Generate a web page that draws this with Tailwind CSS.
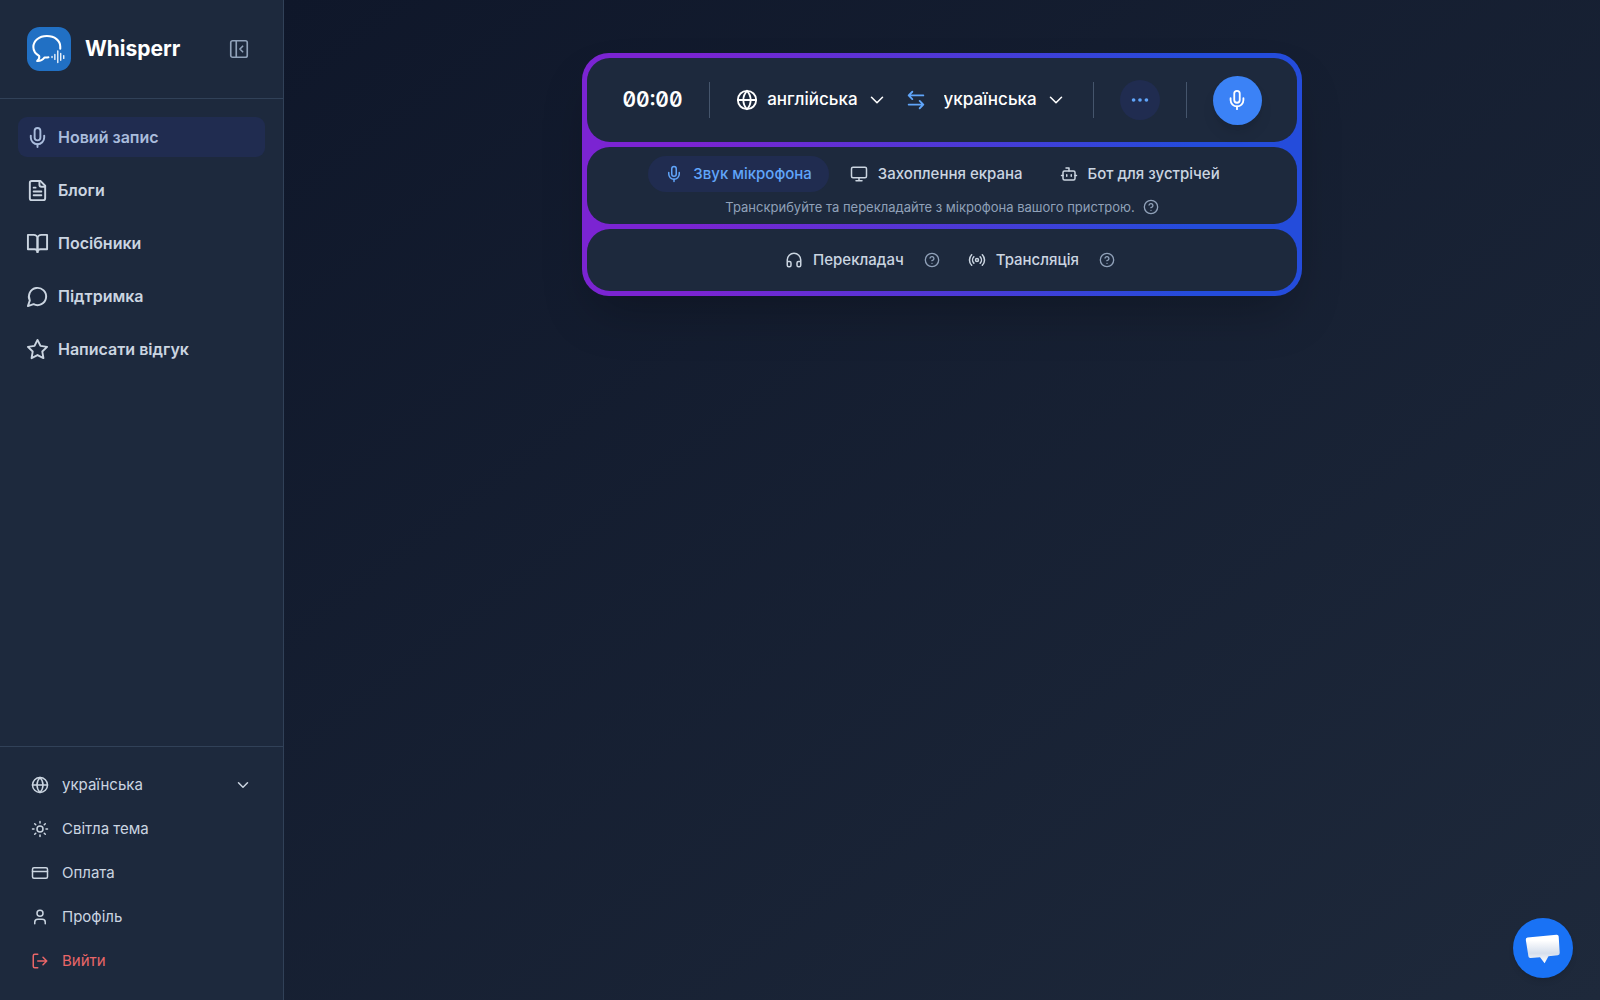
<!DOCTYPE html>
<html lang="uk">
<head>
<meta charset="utf-8">
<meta name="viewport" content="width=device-width, initial-scale=1">
<title>Whisperr</title>
<script src="https://cdn.jsdelivr.net/npm/@tailwindcss/browser@4"></script>
</head>
<body class="flex min-h-screen bg-slate-900 font-['Inter',sans-serif] text-base text-[#cbd5e1] antialiased">

<!-- Shared icon shapes, drawn on a 24 unit grid -->
<svg class="hidden" aria-hidden="true">
  <symbol id="mic" viewBox="0 0 24 24"><path d="M12 2a3 3 0 0 0-3 3v7a3 3 0 0 0 6 0V5a3 3 0 0 0-3-3Z"/><path d="M19 10v2a7 7 0 0 1-14 0v-2"/><path d="M12 19v3"/></symbol>
  <symbol id="globe" viewBox="0 0 24 24"><circle cx="12" cy="12" r="10"/><path d="M12 2a14.5 14.5 0 0 0 0 20 14.5 14.5 0 0 0 0-20"/><path d="M2 12h20"/></symbol>
  <symbol id="chevron" viewBox="0 0 24 24"><path d="m6 9 6 6 6-6"/></symbol>
  <symbol id="help" viewBox="0 0 24 24"><circle cx="12" cy="12" r="10"/><path d="M9.09 9a3 3 0 0 1 5.83 1c0 2-3 3-3 3"/><path d="M12 17h.01"/></symbol>
</svg>

<aside class="flex w-[284px] shrink-0 flex-col border-r border-slate-700 bg-slate-800">
  <div class="flex h-[99px] shrink-0 items-center border-b border-slate-700 pr-[33px] pl-[27px]">
    <svg class="size-11" viewBox="0 0 45 45" fill="none" stroke="#fff" stroke-linecap="round" stroke-linejoin="round" role="img" aria-label="Whisperr">
      <rect width="45" height="45" rx="13" fill="#2170c4" stroke="none"/>
      <path stroke-width="2.100" d="M34 22.200V20C34 14 28.400 9.300 20.300 9.300S6.500 14.200 6.500 20.500c0 4 2.200 7 5.900 9 .6 1.600-.3 3.600-2 5.300 3.500.2 5.800-1.300 7.600-3.700 1.400.2 2.700.1 3.900-.1"/>
      <path stroke-width="1.300" d="M25.600 30v1.200M28.500 28v5.200M31.500 24.500v11.800M34.500 27v7M37.600 29.200v3"/>
    </svg>
    <span class="ml-[14px] text-[21px] font-bold text-white">Whisperr</span>
    <button type="button" class="ml-auto text-slate-400" aria-label="Згорнути панель">
      <svg class="size-[22px]" viewBox="0 0 24 24" fill="none" stroke="currentColor" stroke-width="1.800" stroke-linecap="round" stroke-linejoin="round"><rect x="3" y="3" width="18" height="18" rx="2"/><path d="M9 3v18"/><path d="m16 15-3-3 3-3"/></svg>
    </button>
  </div>

  <nav class="flex flex-col gap-[13px] px-[18px] pt-[18px] font-semibold">
    <a href="#" class="flex h-10 items-center gap-[9px] rounded-[9px] bg-[#202c50] px-2 text-[#a9bcdc]">
      <svg class="size-[23px]" fill="none" stroke="currentColor" stroke-width="2" stroke-linecap="round" stroke-linejoin="round"><use href="#mic"/></svg>Новий запис</a>
    <a href="#" class="flex h-10 items-center gap-[9px] px-2">
      <svg class="size-[23px]" viewBox="0 0 24 24" fill="none" stroke="currentColor" stroke-width="2" stroke-linecap="round" stroke-linejoin="round"><path d="M15 2H6a2 2 0 0 0-2 2v16a2 2 0 0 0 2 2h12a2 2 0 0 0 2-2V7Z"/><path d="M14 2v4a2 2 0 0 0 2 2h4M10 9H8M16 13H8M16 17H8"/></svg>Блоги</a>
    <a href="#" class="flex h-10 items-center gap-[9px] px-2">
      <svg class="size-[23px]" viewBox="0 0 24 24" fill="none" stroke="currentColor" stroke-width="2" stroke-linecap="round" stroke-linejoin="round"><path d="M2 3h6a4 4 0 0 1 4 4v14a3 3 0 0 0-3-3H2z"/><path d="M22 3h-6a4 4 0 0 0-4 4v14a3 3 0 0 1 3-3h7z"/></svg>Посібники</a>
    <a href="#" class="flex h-10 items-center gap-[9px] px-2">
      <svg class="size-[23px]" viewBox="0 0 24 24" fill="none" stroke="currentColor" stroke-width="2" stroke-linecap="round" stroke-linejoin="round"><path d="M7.900 20A9 9 0 1 0 4 16.100L2 22Z"/></svg>Підтримка</a>
    <a href="#" class="flex h-10 items-center gap-[9px] px-2">
      <svg class="size-[23px]" viewBox="0 0 24 24" fill="none" stroke="currentColor" stroke-width="2" stroke-linecap="round" stroke-linejoin="round"><path d="m12 2 3.090 6.260L22 9.270l-5 4.870 1.180 6.880L12 17.770l-6.180 3.250L7 14.140 2 9.270l6.910-1.010z"/></svg>Написати відгук</a>
  </nav>

  <div class="mt-auto flex flex-col border-t border-slate-700 px-[18px] pt-4 pb-[17px] text-[15px]">
    <div class="relative flex h-11 items-center gap-[13px] px-[13px]">
      <svg class="size-[18px]" fill="none" stroke="currentColor" stroke-width="2" stroke-linecap="round" stroke-linejoin="round"><use href="#globe"/></svg>
      <select aria-label="Мова інтерфейсу" class="h-full flex-1 appearance-none"><option>українська</option></select>
      <svg class="pointer-events-none absolute right-[13px] size-[18px]" fill="none" stroke="currentColor" stroke-width="2" stroke-linecap="round" stroke-linejoin="round"><use href="#chevron"/></svg>
    </div>
    <button type="button" class="flex h-11 items-center gap-[13px] px-[13px]">
      <svg class="size-[18px]" viewBox="0 0 24 24" fill="none" stroke="currentColor" stroke-width="2" stroke-linecap="round" stroke-linejoin="round"><circle cx="12" cy="12" r="4"/><path d="M12 2v2M12 20v2M4.930 4.930l1.410 1.410M17.660 17.660l1.410 1.410M2 12h2M20 12h2M6.340 17.660l-1.410 1.410M19.070 4.930l-1.410 1.410"/></svg>Світла тема</button>
    <a href="#" class="flex h-11 items-center gap-[13px] px-[13px]">
      <svg class="size-[18px]" viewBox="0 0 24 24" fill="none" stroke="currentColor" stroke-width="2" stroke-linecap="round" stroke-linejoin="round"><rect x="2" y="5" width="20" height="14" rx="2"/><path d="M2 10h20"/></svg>Оплата</a>
    <a href="#" class="flex h-11 items-center gap-[13px] px-[13px]">
      <svg class="size-[18px]" viewBox="0 0 24 24" fill="none" stroke="currentColor" stroke-width="2" stroke-linecap="round" stroke-linejoin="round"><path d="M19 21v-2a4 4 0 0 0-4-4H9a4 4 0 0 0-4 4v2"/><circle cx="12" cy="7" r="4"/></svg>Профіль</a>
    <button type="button" class="flex h-11 items-center gap-[13px] px-[13px] text-[#ea6668]">
      <svg class="size-[18px]" viewBox="0 0 24 24" fill="none" stroke="currentColor" stroke-width="2" stroke-linecap="round" stroke-linejoin="round"><path d="M9 21H5a2 2 0 0 1-2-2V5a2 2 0 0 1 2-2h4"/><path d="m16 17 5-5-5-5M21 12H9"/></svg>Вийти</button>
  </div>
</aside>

<main class="flex flex-1 flex-col items-center bg-linear-to-br/srgb from-[#0f172a] to-[#1e293b] pt-[53px]">
  <div class="flex w-full max-w-[720px] flex-col gap-[5px] rounded-[27px] bg-linear-to-r/srgb from-[#7b24d2] from-15% to-[#244cdb] to-85% p-[5px] shadow-2xl">

    <section class="flex h-[84px] items-center justify-between rounded-[23px] bg-slate-800 px-[35px] text-white">
      <time class="w-[61px] text-center text-[21px] font-semibold slashed-zero tabular-nums">00:00</time>
      <div class="h-9 w-px bg-slate-600"></div>
      <div class="flex items-center text-[17px] font-medium">
        <svg class="mr-[9px] size-[22px]" fill="none" stroke="currentColor" stroke-width="2" stroke-linecap="round" stroke-linejoin="round"><use href="#globe"/></svg>
        <div class="relative flex items-center">
          <select aria-label="Мова оригіналу" class="field-sizing-content appearance-none pr-[30px]"><option>англійська</option></select>
          <svg class="pointer-events-none absolute right-0 size-[22px]" fill="none" stroke="currentColor" stroke-width="1.700" stroke-linecap="round" stroke-linejoin="round"><use href="#chevron"/></svg>
        </div>
        <button type="button" aria-label="Поміняти мови" class="mx-[17px] text-[#60a5fa]">
          <svg class="size-[22px]" viewBox="0 0 24 24" fill="none" stroke="currentColor" stroke-width="2" stroke-linecap="round" stroke-linejoin="round"><path d="M8 3 4 7l4 4M4 7h16M16 21l4-4-4-4M20 17H4"/></svg>
        </button>
        <div class="relative flex items-center">
          <select aria-label="Мова перекладу" class="field-sizing-content appearance-none pr-[30px]"><option>українська</option></select>
          <svg class="pointer-events-none absolute right-0 size-[22px]" fill="none" stroke="currentColor" stroke-width="1.700" stroke-linecap="round" stroke-linejoin="round"><use href="#chevron"/></svg>
        </div>
      </div>
      <div class="h-9 w-px bg-slate-600"></div>
      <button type="button" aria-label="Більше" class="grid size-10 place-items-center rounded-full bg-[#202c50] text-[#60a5fa]">
        <svg class="size-[22px]" viewBox="0 0 24 24" fill="currentColor"><circle cx="5" cy="12" r="2"/><circle cx="12" cy="12" r="2"/><circle cx="19" cy="12" r="2"/></svg>
      </button>
      <div class="h-9 w-px bg-slate-600"></div>
      <button type="button" aria-label="Почати запис" class="grid size-[49px] place-items-center rounded-full bg-[#3b82f6] shadow-lg">
        <svg class="size-[22px]" fill="none" stroke="currentColor" stroke-width="2" stroke-linecap="round" stroke-linejoin="round"><use href="#mic"/></svg>
      </button>
    </section>

    <section class="flex h-[77px] flex-col items-center rounded-[23px] bg-slate-800 pt-[9px]">
      <div class="flex gap-[5px] text-[15px] font-medium">
        <button type="button" class="flex h-9 items-center gap-2.5 rounded-full bg-[#202c50] px-[17px] text-[#60a5fa]">
          <svg class="size-[18px]" fill="none" stroke="currentColor" stroke-width="2" stroke-linecap="round" stroke-linejoin="round"><use href="#mic"/></svg>Звук мікрофона</button>
        <button type="button" class="flex h-9 items-center gap-2.5 px-4">
          <svg class="size-[18px]" viewBox="0 0 24 24" fill="none" stroke="currentColor" stroke-width="2" stroke-linecap="round" stroke-linejoin="round"><rect x="2" y="3" width="20" height="14" rx="2"/><path d="M8 21h8M12 17v4"/></svg>Захоплення екрана</button>
        <button type="button" class="flex h-9 items-center gap-2.5 px-4">
          <svg class="size-[18px]" viewBox="0 0 24 24" fill="none" stroke="currentColor" stroke-width="2" stroke-linecap="round" stroke-linejoin="round"><path d="M12 8V4H8"/><rect x="4" y="8" width="16" height="12" rx="2"/><path d="M2 14h2M20 14h2M15 13v2M9 13v2"/></svg>Бот для зустрічей</button>
      </div>
      <p class="mt-[5px] flex items-center gap-2 text-[13px] leading-5 text-slate-400">Транскрибуйте та перекладайте з мікрофона вашого пристрою.
        <svg class="size-4" fill="none" stroke="currentColor" stroke-width="2" stroke-linecap="round" stroke-linejoin="round"><use href="#help"/></svg></p>
    </section>

    <section class="flex h-[62px] items-center justify-center gap-3 rounded-[23px] bg-slate-800 text-[15px] font-medium">
      <div class="flex items-center gap-1">
        <button type="button" class="flex h-9 items-center gap-2.5 px-4">
          <svg class="size-[18px]" viewBox="0 0 24 24" fill="none" stroke="currentColor" stroke-width="2" stroke-linecap="round" stroke-linejoin="round"><path d="M3 14h3a2 2 0 0 1 2 2v3a2 2 0 0 1-2 2H5a2 2 0 0 1-2-2v-7a9 9 0 0 1 18 0v7a2 2 0 0 1-2 2h-1a2 2 0 0 1-2-2v-3a2 2 0 0 1 2-2h3"/></svg>Перекладач</button>
        <button type="button" aria-label="Про перекладача" class="text-slate-400"><svg class="size-4" fill="none" stroke="currentColor" stroke-width="2" stroke-linecap="round" stroke-linejoin="round"><use href="#help"/></svg></button>
      </div>
      <div class="flex items-center gap-1">
        <button type="button" class="flex h-9 items-center gap-2.5 px-4">
          <svg class="size-[18px]" viewBox="0 0 24 24" fill="none" stroke="currentColor" stroke-width="2" stroke-linecap="round" stroke-linejoin="round"><path d="M4.900 19.100C1 15.200 1 8.800 4.900 4.900M7.800 16.200c-2.300-2.300-2.300-6.100 0-8.500M16.200 7.800c2.300 2.300 2.300 6.100 0 8.500M19.100 4.900C23 8.800 23 15.100 19.100 19"/><circle cx="12" cy="12" r="2"/></svg>Трансляція</button>
        <button type="button" aria-label="Про трансляцію" class="text-slate-400"><svg class="size-4" fill="none" stroke="currentColor" stroke-width="2" stroke-linecap="round" stroke-linejoin="round"><use href="#help"/></svg></button>
      </div>
    </section>
  </div>
</main>

<button type="button" aria-label="Чат" class="fixed right-[27px] bottom-[22px] grid size-[60px] place-items-center rounded-full bg-[#1972f5] shadow-md">
  <svg class="size-[60px]" viewBox="0 0 60 60">
    <defs><linearGradient id="bubble" x1="0" y1="0" x2="0" y2="1"><stop offset="0.2" stop-color="#fff"/><stop offset="0.65" stop-color="#d5deec"/><stop offset="1" stop-color="#fff"/></linearGradient></defs>
    <path fill="url(#bubble)" d="M14.500 19.500 43.500 16.800q2-.2 2.200 1.800l1 16.500q.1 2-1.900 2.200l-9.300.9-3.900 7.100-4.600-6.100-9.400.9q-2 .2-2.200-1.800l-2.600-16.600q-.2-2 1.700-2.200z"/>
  </svg>
</button>
</body>
</html>
